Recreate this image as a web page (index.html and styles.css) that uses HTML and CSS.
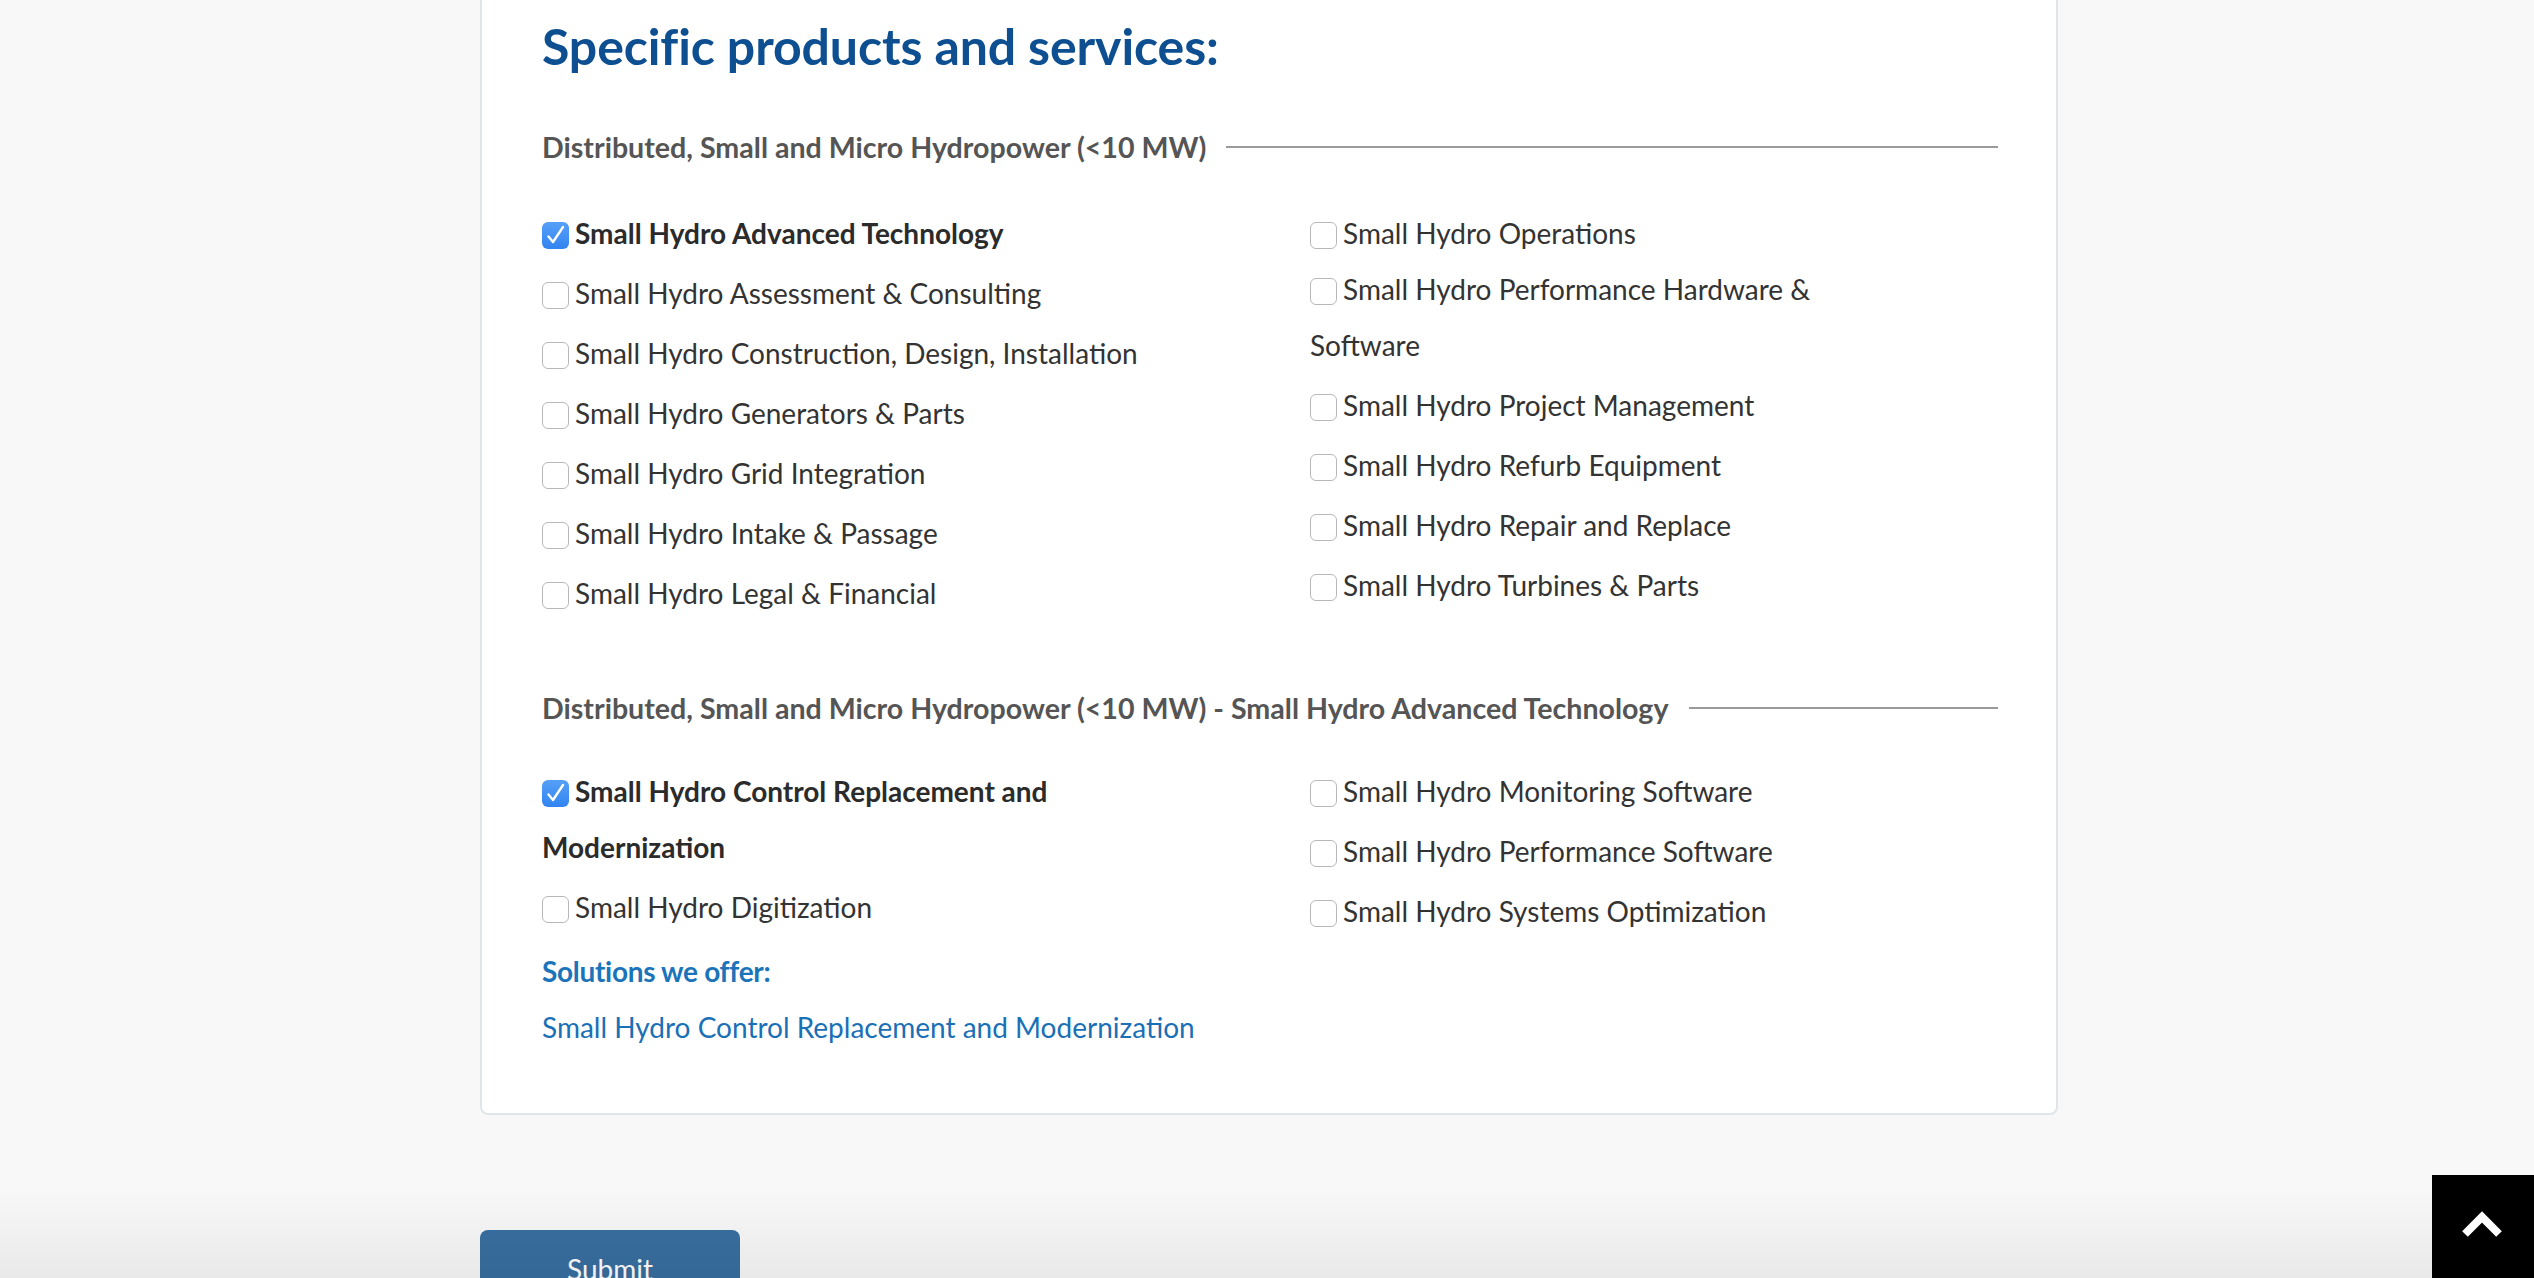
FILE: index.html
```html
<!DOCTYPE html>
<html lang="en">
<head>
<meta charset="utf-8">
<title>Specific products and services</title>
<link rel="stylesheet" href="styles.css">
</head>
<body>
<div class="page">
  <div class="card">
    <h2 class="title">Specific products and services:</h2>

    <div class="section">
      <div class="section-head"><span class="section-name">Distributed, Small and Micro Hydropower (&lt;10 MW)</span><span class="rule"></span></div>
      <div class="grid">
        <div class="col col-left">
          <label class="item checked"><span class="cb"><svg viewBox="0 0 27 27"><polyline points="6.5,14.5 11,20 21,5" /></svg></span>Small Hydro Advanced Technology</label>
          <label class="item"><span class="cb"></span>Small Hydro Assessment &amp; Consulting</label>
          <label class="item"><span class="cb"></span>Small Hydro Construction, Design, Installation</label>
          <label class="item"><span class="cb"></span>Small Hydro Generators &amp; Parts</label>
          <label class="item"><span class="cb"></span>Small Hydro Grid Integration</label>
          <label class="item"><span class="cb"></span>Small Hydro Intake &amp; Passage</label>
          <label class="item"><span class="cb"></span>Small Hydro Legal &amp; Financial</label>
        </div>
        <div class="col col-right">
          <label class="item tight"><span class="cb"></span>Small Hydro Operations</label>
          <label class="item"><span class="cb"></span>Small Hydro Performance Hardware &amp; Software</label>
          <label class="item"><span class="cb"></span>Small Hydro Project Management</label>
          <label class="item"><span class="cb"></span>Small Hydro Refurb Equipment</label>
          <label class="item"><span class="cb"></span>Small Hydro Repair and Replace</label>
          <label class="item"><span class="cb"></span>Small Hydro Turbines &amp; Parts</label>
        </div>
      </div>
    </div>

    <div class="section section-second">
      <div class="section-head"><span class="section-name">Distributed, Small and Micro Hydropower (&lt;10 MW) - Small Hydro Advanced Technology</span><span class="rule"></span></div>
      <div class="grid">
        <div class="col col-left">
          <label class="item checked"><span class="cb"><svg viewBox="0 0 27 27"><polyline points="6.5,14.5 11,20 21,5" /></svg></span>Small Hydro Control Replacement and Modernization</label>
          <label class="item"><span class="cb"></span>Small Hydro Digitization</label>
        </div>
        <div class="col col-right">
          <label class="item"><span class="cb"></span>Small Hydro Monitoring Software</label>
          <label class="item"><span class="cb"></span>Small Hydro Performance Software</label>
          <label class="item"><span class="cb"></span>Small Hydro Systems Optimization</label>
        </div>
      </div>
      <div class="solutions">Solutions we offer:</div>
      <a class="solution-link" href="#">Small Hydro Control Replacement and Modernization</a>
    </div>
  </div>

  <button class="submit" type="button">Submit</button>
</div>

<div class="bottom-shade"></div>
<a class="to-top" href="#" aria-label="Back to top"><svg viewBox="0 0 102 103"><polyline points="33,59 50,42 67,59" /></svg></a>
</body>
</html>
```

FILE: styles.css
```css
html, body {
  margin: 0;
  padding: 0;
}

body {
  background: #f8f8f8;
  font-family: Lato, "Open Sans", "Liberation Sans", sans-serif;
  color: #333;
  height: 1278px;
  overflow: hidden;
}

.page {
  width: 1578px;
  margin: 0 0 0 480px;
}

.card {
  box-sizing: border-box;
  margin-top: -20px;
  background: #fff;
  border: 2px solid #e0e5eb;
  border-radius: 8px;
  padding: 34px 58px 58px 60px;
}

.title {
  margin: 0 0 54px;
  font-size: 50px;
  line-height: 60px;
  font-weight: 700;
  color: #0d4f90;
  letter-spacing: -0.1px;
}

.section-head {
  display: flex;
  align-items: center;
  height: 34px;
  margin-bottom: 41px;
}

.section-name {
  font-size: 28.6px;
  font-weight: 700;
  color: #555;
  line-height: 34px;
  white-space: nowrap;
  letter-spacing: 0;
}

.rule {
  flex: 1;
  height: 2px;
  background: #9a9a9a;
  margin-left: 20px;
}

.grid {
  display: grid;
  grid-template-columns: 650px 560px;
  column-gap: 118px;
}

.col {
  display: flex;
  flex-direction: column;
}

.item {
  display: block;
  font-size: 28px;
  line-height: 56px;
  margin-bottom: 4px;
  color: #333;
}

.item.tight {
  margin-bottom: 0;
}

.item.checked {
  font-weight: 700;
  color: #2b2b2b;
}

.cb {
  display: inline-block;
  box-sizing: border-box;
  width: 27px;
  height: 27px;
  margin-right: 6px;
  vertical-align: -5px;
  border: 1.5px solid #b8b8b8;
  border-radius: 6px;
  background: #fff;
}

.checked .cb {
  border: none;
  background: linear-gradient(#56a0f8, #3384f1);
}

.cb svg {
  display: block;
  width: 27px;
  height: 27px;
}

.cb polyline {
  fill: none;
  stroke: #fff;
  stroke-width: 2.4;
  stroke-linecap: round;
  stroke-linejoin: round;
}

.section-second {
  margin-top: 66px;
}

.section-second .section-head {
  margin-bottom: 38px;
}

.solutions {
  font-size: 28px;
  line-height: 56px;
  font-weight: 700;
  color: #1b74ba;
  letter-spacing: -0.3px;
}

.solution-link {
  display: block;
  font-size: 28px;
  line-height: 56px;
  color: #1a70b6;
  text-decoration: none;
}

.submit {
  display: flex;
  justify-content: center;
  align-items: flex-start;
  margin-top: 115px;
  width: 260px;
  height: 90px;
  padding: 11px 0 0;
  border: none;
  border-radius: 8px;
  background: #386fa0;
  color: #fff;
  font-family: Lato, "Open Sans", "Liberation Sans", sans-serif;
  font-size: 28px;
  line-height: 56px;
}

.bottom-shade {
  position: fixed;
  left: 0;
  right: 0;
  bottom: 0;
  height: 90px;
  background: linear-gradient(rgba(0, 0, 0, 0), rgba(0, 0, 0, 0.06));
  pointer-events: none;
}

.to-top {
  position: fixed;
  right: 0;
  bottom: 0;
  width: 102px;
  height: 103px;
  background: #000;
}

.to-top svg {
  display: block;
  width: 102px;
  height: 103px;
}

.to-top polyline {
  fill: none;
  stroke: #fff;
  stroke-width: 8;
  stroke-linecap: butt;
  stroke-linejoin: miter;
}
```
